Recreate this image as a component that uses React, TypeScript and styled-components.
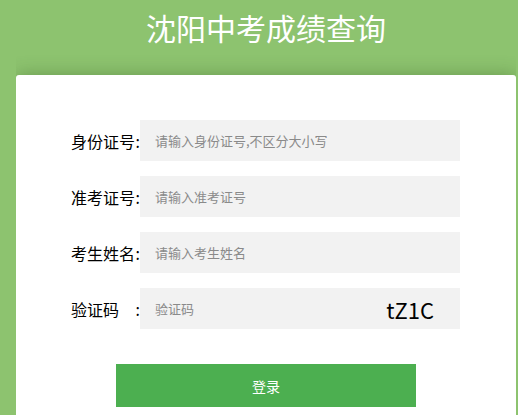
import React from 'react';
import styled, { createGlobalStyle } from 'styled-components';

const GlobalStyle = createGlobalStyle`
    html,
    body {
        margin: 0;
        padding: 0;
        background: #8dc36f;
        font-family: 'Microsoft YaHei', 'Noto Sans CJK SC', 'Noto Sans', sans-serif;
    }
    * {
        box-sizing: border-box;
    }
`;

const Page = styled.div`
    width: 500px;
    margin-left: 16px;
    height: 415px;
    overflow: hidden;
`;

const Title = styled.h1`
    margin: 0;
    height: 75px;
    padding-top: 5px;
    text-align: center;
    font-size: 30px;
    font-weight: normal;
    line-height: 44px;
    color: #ffffff;
`;

const Card = styled.div`
    background: #ffffff;
    border-radius: 3px;
    box-shadow: 0 0 18px rgba(60, 100, 40, 0.45);
    padding: 45px 0 40px;
    height: 400px;
`;

const Form = styled.div`
    display: flex;
    flex-direction: column;
    gap: 15px;
    padding-left: 55px;
`;

const Row = styled.div`
    display: flex;
    align-items: center;
    height: 41px;
`;

const Label = styled.label`
    width: 69px;
    display: flex;
    justify-content: space-between;
    font-size: 16px;
    color: #000000;
`;

const Field = styled.div`
    width: 320px;
    height: 41px;
    background: #f2f2f2;
    display: flex;
    align-items: center;
    justify-content: space-between;
    padding: 0 26px 0 15px;
`;

const Input = styled.input`
    flex: 1;
    min-width: 0;
    border: none;
    outline: none;
    background: transparent;
    font-family: inherit;
    font-size: 13px;
    color: #333;
    padding: 0;
    &::placeholder {
        color: #8a8a8a;
    }
`;

const Captcha = styled.span`
    font-family: 'Noto Sans CJK SC', 'Noto Sans', sans-serif;
    font-size: 22px;
    color: #000000;
`;

const Submit = styled.button`
    display: block;
    width: 300px;
    height: 43px;
    margin: 35px 0 0 100px;
    border: none;
    background: #4caf50;
    color: #ffffff;
    font-family: inherit;
    font-size: 14px;
    cursor: pointer;
`;

const fields = [
    { label: '身份证号', placeholder: '请输入身份证号,不区分大小写' },
    { label: '准考证号', placeholder: '请输入准考证号' },
    { label: '考生姓名', placeholder: '请输入考生姓名' },
];

export default function App() {
    return (
        <>
            <GlobalStyle />
            <Page>
                <Title>沈阳中考成绩查询</Title>
                <Card>
                    <Form>
                        {fields.map(f => (
                            <Row key={f.label}>
                                <Label>
                                    <span>{f.label}</span>
                                    <span>:</span>
                                </Label>
                                <Field>
                                    <Input placeholder={f.placeholder} />
                                </Field>
                            </Row>
                        ))}
                        <Row>
                            <Label>
                                <span>验证码</span>
                                <span>:</span>
                            </Label>
                            <Field>
                                <Input placeholder="验证码" />
                                <Captcha>tZ1C</Captcha>
                            </Field>
                        </Row>
                    </Form>
                    <Submit>登录</Submit>
                </Card>
            </Page>
        </>
    );
}
